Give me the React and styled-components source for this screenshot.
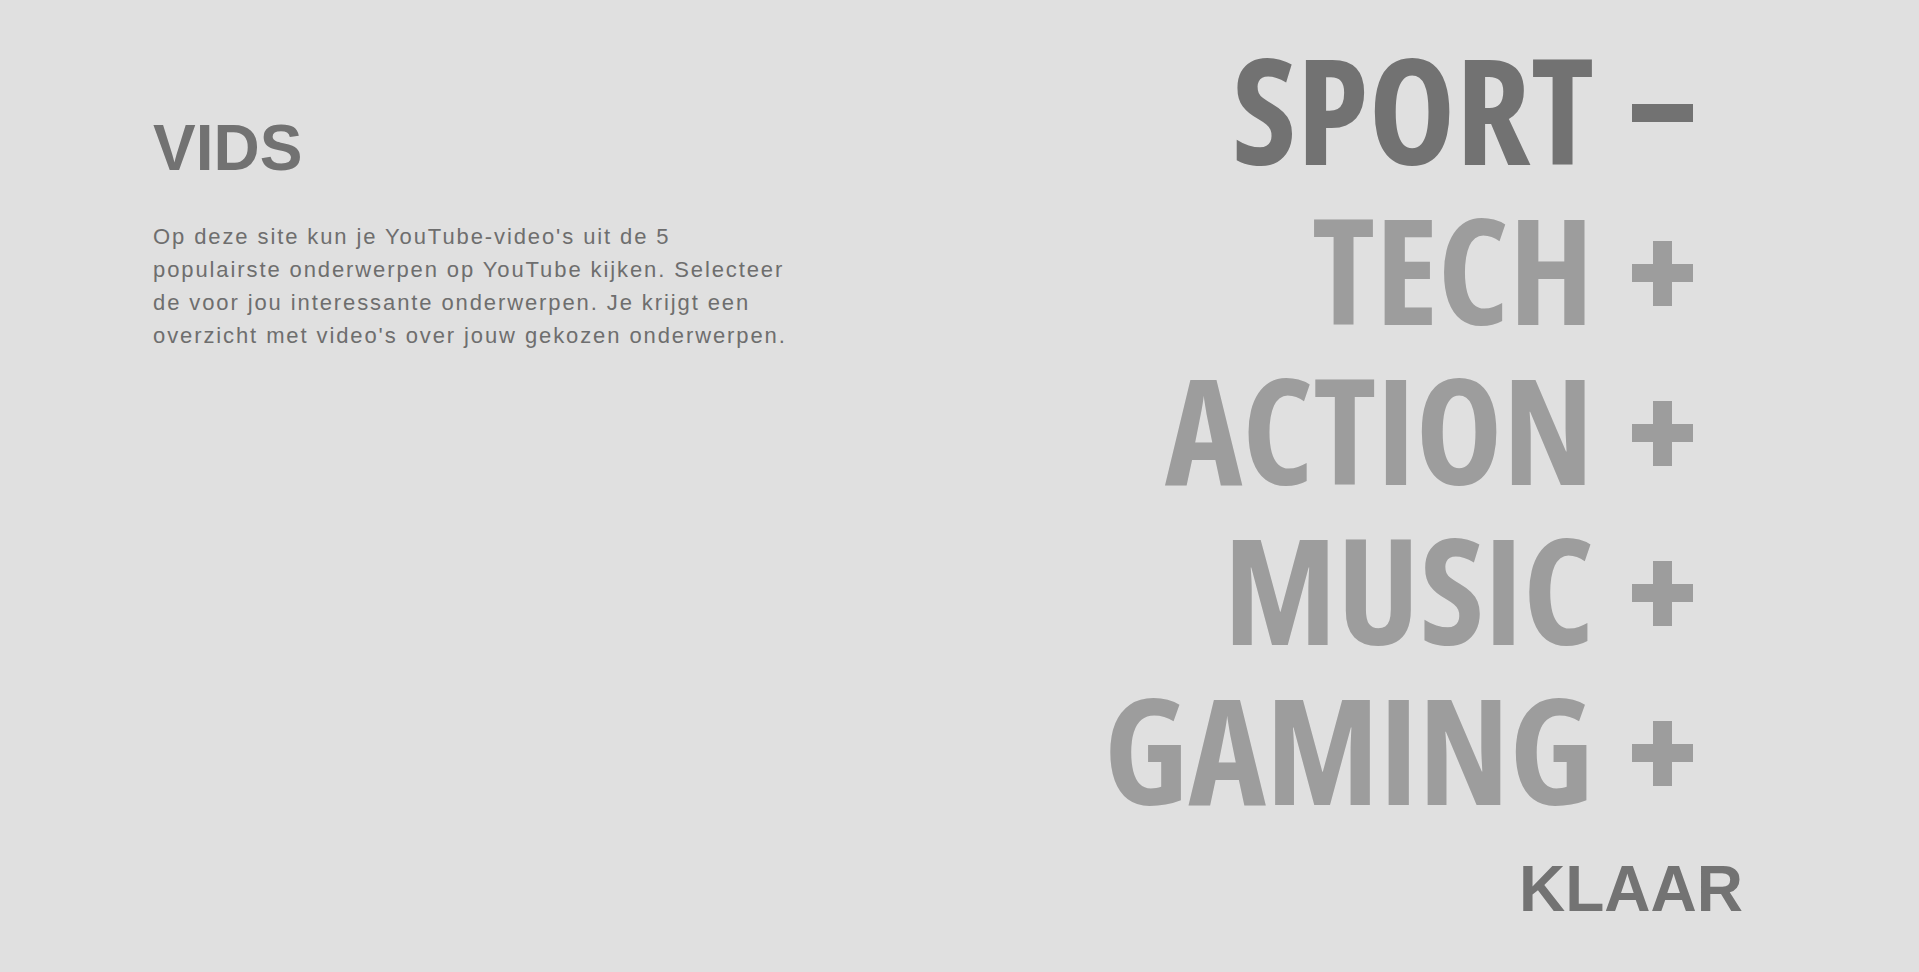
import React, { useState } from "react";
import styled, { createGlobalStyle } from "styled-components";

const topics = ["SPORT", "TECH", "ACTION", "MUSIC", "GAMING"];

const App = () => {
  const [selected, setSelected] = useState(["SPORT"]);

  const toggle = (topic) => {
    setSelected((prev) =>
      prev.includes(topic) ? prev.filter((t) => t !== topic) : [...prev, topic]
    );
  };

  return (
    <>
      <GlobalStyle />
      <Page>
        <Intro>
          <Logo>VIDS</Logo>
          <Text>
            Op deze site kun je YouTube-video's uit de 5 populairste onderwerpen
            op YouTube kijken. Selecteer de voor jou interessante onderwerpen. Je
            krijgt een overzicht met video's over jouw gekozen onderwerpen.
          </Text>
        </Intro>

        <Picker>
          <TopicList>
            {topics.map((topic) => {
              const active = selected.includes(topic);
              return (
                <Topic key={topic} $active={active} onClick={() => toggle(topic)}>
                  {topic}
                  <Sign $open={!active} aria-label={active ? "min" : "plus"} />
                </Topic>
              );
            })}
          </TopicList>
          <Done>KLAAR</Done>
        </Picker>
      </Page>
    </>
  );
};

const GlobalStyle = createGlobalStyle`
  html, body {
    margin: 0;
    background: #e0e0e0;
  }
  body {
    font-family: "Liberation Sans", Arial, sans-serif;
  }
`;

const Page = styled.div`
  display: grid;
  grid-template-columns: 1fr 1fr;
  min-height: 972px;
  box-sizing: border-box;
`;

const Intro = styled.div`
  padding: 111px 0 0 153px;
  color: #727272;
`;

const Logo = styled.h1`
  margin: 0;
  font-size: 64px;
  font-weight: 700;
  line-height: 74px;
`;

const Text = styled.p`
  margin: 35px 0 0;
  width: 645px;
  font-size: 22px;
  line-height: 33px;
  letter-spacing: 1.9px;
  color: #6e6e6e;
`;

const Picker = styled.div`
  display: flex;
  flex-direction: column;
  align-items: flex-end;
  padding: 28px 176px 0 0;
`;

const TopicList = styled.ul`
  list-style: none;
  margin: 0 50px 0 0;
  padding: 0;
  display: flex;
  flex-direction: column;
  align-items: flex-end;
`;

const Topic = styled.li`
  font-family: "Open Sans", sans-serif;
  font-weight: 670;
  font-stretch: 82.5%;
  font-size: 147px;
  line-height: 160px;
  color: ${(p) => (p.$active ? "#727272" : "#9d9d9d")};
  cursor: pointer;
  white-space: nowrap;
`;

// plus / minus toggle, drawn with two bars
const Sign = styled.span`
  position: relative;
  display: inline-block;
  width: 61px;
  height: 65px;
  margin: 0 0 19px 38px;

  &::before,
  &::after {
    content: "";
    position: absolute;
    background: currentColor;
  }
  &::before {
    left: 0;
    right: 0;
    top: 23px;
    height: 18px;
  }
  &::after {
    display: ${(p) => (p.$open ? "block" : "none")};
    top: 0;
    bottom: 0;
    left: 21px;
    width: 19px;
  }
`;

const Done = styled.button`
  margin-top: 24px;
  padding: 0;
  border: 0;
  background: none;
  font-family: "Liberation Sans", Arial, sans-serif;
  font-size: 64px;
  font-weight: 700;
  line-height: 74px;
  color: #737373;
  cursor: pointer;
`;

export default App;
